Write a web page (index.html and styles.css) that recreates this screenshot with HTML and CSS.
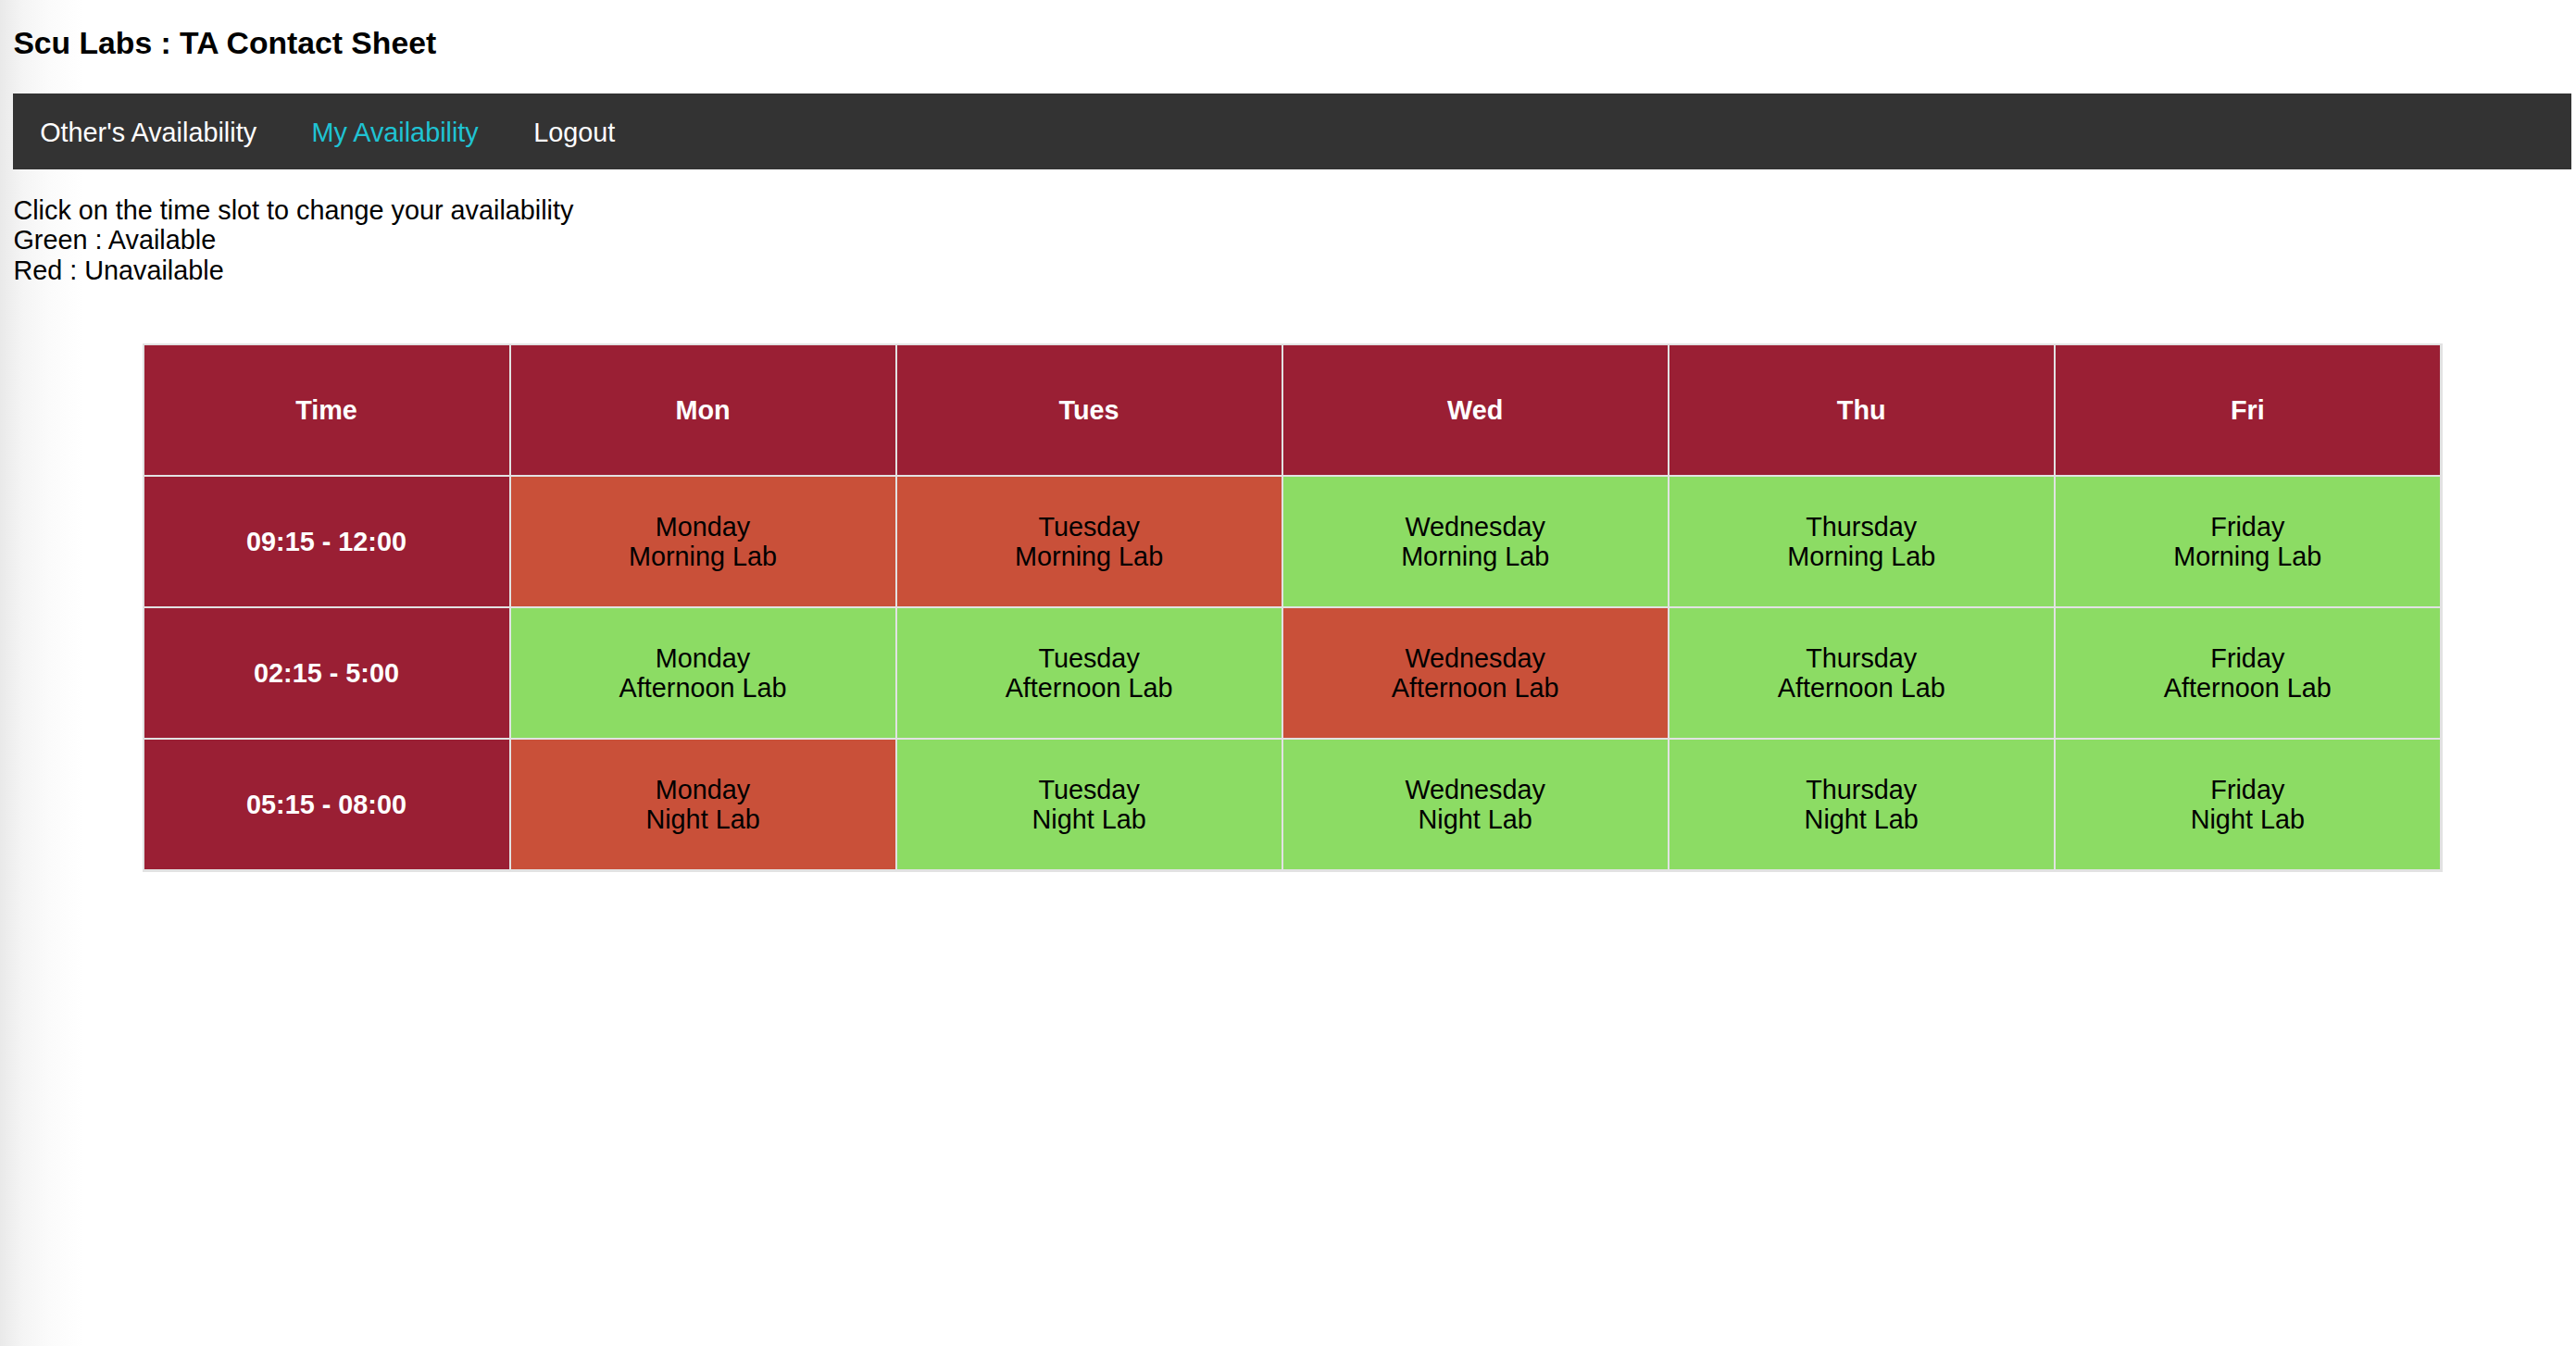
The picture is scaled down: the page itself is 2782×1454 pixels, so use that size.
FILE: index.html
```html
<!DOCTYPE html>
<html lang="en">
<head>
<meta charset="utf-8">
<title>Scu Labs : TA Contact Sheet</title>
<link rel="stylesheet" href="styles.css">
</head>
<body>
<h3 class="title">Scu Labs : TA Contact Sheet</h3>
<nav class="topnav">
  <a class="nav-link" href="#">Other's Availability</a>
  <a class="nav-link active" href="#">My Availability</a>
  <a class="nav-link" href="#">Logout</a>
</nav>
<div class="instructions">
  Click on the time slot to change your availability<br>
  Green : Available<br>
  Red : Unavailable
</div>
<table class="schedule">
  <colgroup>
    <col class="col-time">
    <col><col><col><col><col>
  </colgroup>
  <thead>
    <tr>
      <th>Time</th><th>Mon</th><th>Tues</th><th>Wed</th><th>Thu</th><th>Fri</th>
    </tr>
  </thead>
  <tbody>
    <tr>
      <th>09:15 - 12:00</th>
      <td class="busy">Monday<br>Morning Lab</td>
      <td class="busy">Tuesday<br>Morning Lab</td>
      <td class="free">Wednesday<br>Morning Lab</td>
      <td class="free">Thursday<br>Morning Lab</td>
      <td class="free">Friday<br>Morning Lab</td>
    </tr>
    <tr>
      <th>02:15 - 5:00</th>
      <td class="free">Monday<br>Afternoon Lab</td>
      <td class="free">Tuesday<br>Afternoon Lab</td>
      <td class="busy">Wednesday<br>Afternoon Lab</td>
      <td class="free">Thursday<br>Afternoon Lab</td>
      <td class="free">Friday<br>Afternoon Lab</td>
    </tr>
    <tr>
      <th>05:15 - 08:00</th>
      <td class="busy">Monday<br>Night Lab</td>
      <td class="free">Tuesday<br>Night Lab</td>
      <td class="free">Wednesday<br>Night Lab</td>
      <td class="free">Thursday<br>Night Lab</td>
      <td class="free">Friday<br>Night Lab</td>
    </tr>
  </tbody>
</table>
</body>
</html>
```
FILE: styles.css
```css
html {
  min-height: 100%;
  background: #fff linear-gradient(to right, #e9e9e9 0, #f5f5f5 25px, #fbfbfb 55px, #fff 90px) no-repeat;
  background-size: 100% 100%;
}
body {
  margin: 0 5px 0 14.4px;
  font-family: "Liberation Sans", Arial, sans-serif;
  font-size: 28.8px;
  line-height: 32.4px;
  color: #000;
}
.title {
  margin: 0;
  padding-top: 27px;
  font-size: 33.7px;
  line-height: 39px;
  font-weight: bold;
  height: 75px;
  box-sizing: border-box;
}
.topnav {
  display: flex;
  margin-top: 26px;
  background: #333333;
}
.nav-link {
  display: block;
  padding: 26px 29.7px 24px 28.8px;
  margin-right: 0.9px;
  color: #ffffff;
  text-decoration: none;
  line-height: 32px;
}
.nav-link.active {
  color: #1fc3d3;
}
.instructions {
  margin-top: 28px;
}
.schedule {
  width: calc(90% - 2px);
  margin: 63px auto 0;
  border-collapse: separate;
  border-spacing: 2px;
  background: #e2e2e2;
  border: 0;
  padding: 0 1px 1px 0;
}
.col-time {
  width: 394px;
}
.schedule th,
.schedule td {
  height: 140px;
  padding: 0;
  text-align: center;
  vertical-align: middle;
}
.schedule th {
  background: #9a1f34;
  color: #ffffff;
  font-weight: bold;
}
.schedule td.busy {
  background: #c95039;
}
.schedule td.free {
  background: #8cdc64;
}
```
